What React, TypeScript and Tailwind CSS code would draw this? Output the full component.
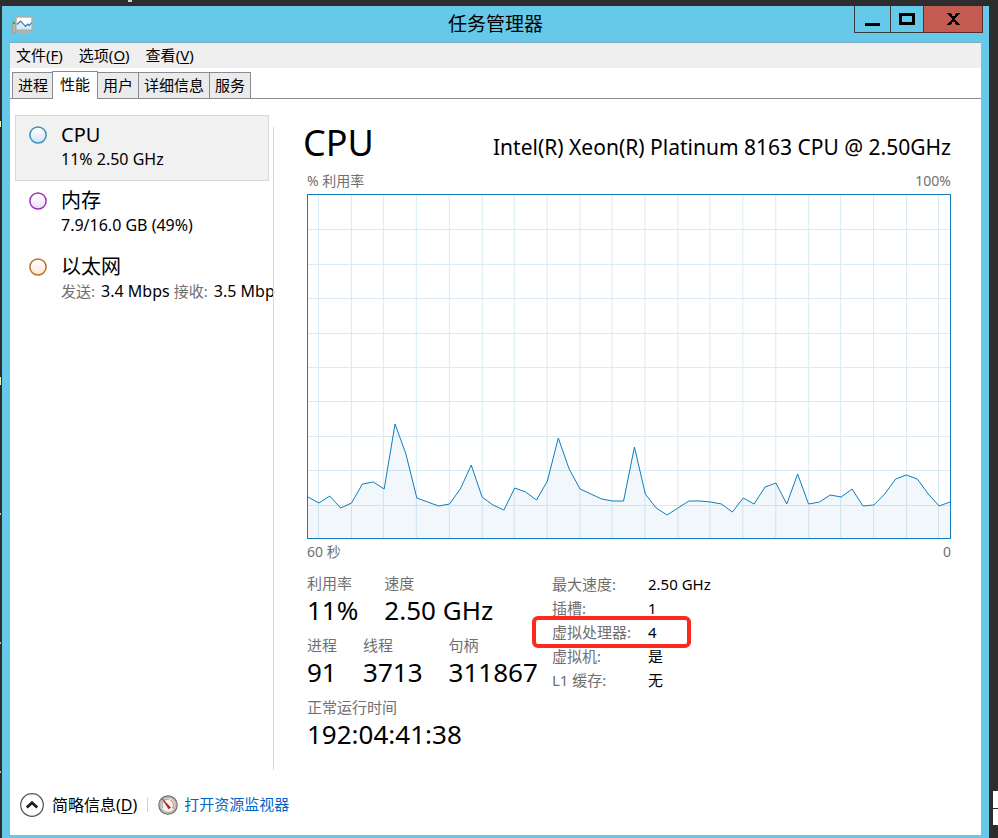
import { useState } from "react";

type Resource = {
  id: string;
  name: string;
  stroke: string;
  fill: string;
  parts: { label?: string; value: string }[];
};

const menus = [
  { label: "文件", key: "F" },
  { label: "选项", key: "O" },
  { label: "查看", key: "V" },
];

const tabs = ["进程", "性能", "用户", "详细信息", "服务"];

const resources: Resource[] = [
  {
    id: "cpu",
    name: "CPU",
    stroke: "#3c8fc0",
    fill: "#cfe2f3",
    parts: [{ value: "11% 2.50 GHz" }],
  },
  {
    id: "memory",
    name: "内存",
    stroke: "#9a35b5",
    fill: "#f0d8fa",
    parts: [{ value: "7.9/16.0 GB (49%)" }],
  },
  {
    id: "ethernet",
    name: "以太网",
    stroke: "#b5702f",
    fill: "#fce3cf",
    parts: [
      { label: "发送:", value: "3.4 Mbps" },
      { label: "接收:", value: "3.5 Mbp" },
    ],
  },
];

const details = [
  { label: "最大速度:", value: "2.50 GHz" },
  { label: "插槽:", value: "1" },
  { label: "虚拟处理器:", value: "4", marked: true },
  { label: "虚拟机:", value: "是" },
  { label: "L1 缓存:", value: "无" },
];

// CPU load samples, chart units above the baseline
const samples = [
  41, 35, 42, 30, 35, 54, 56, 49, 114, 84, 40, 36, 32, 34, 49, 73, 41, 33, 28,
  50, 46, 38, 57, 100, 69, 49, 44, 39, 37, 37, 91, 44, 30, 23, 30, 37, 37, 36,
  34, 26, 40, 34, 51, 55, 34, 64, 34, 36, 43, 41, 49, 32, 33, 44, 59, 63, 59,
  44, 32, 36,
];

function MonitorIcon() {
  return (
    <svg width="22" height="19" viewBox="0 0 22 19" aria-hidden="true">
      <rect x="0.5" y="5" width="3" height="12" fill="#b9b5b0" stroke="#98948f" strokeWidth="0.6" />
      <rect x="1" y="6" width="2" height="2" fill="#2fae35" />
      <path d="M9 14h6l1.5 2.5H19V18H6v-1.5h1.5z" fill="#b8b2ac" />
      <rect x="4" y="1" width="16" height="13" fill="#fff" stroke="#b5aba3" strokeWidth="1.4" />
      <path d="M5 10l3-4 4 5 3-4 4 5v1H5z" fill="#d4ecfa" />
      <path d="M5 8.500l3.500-3.500 5 5.500 2.500-2.500 1.500 1.500 2-3" fill="none" stroke="#2b7fb8" strokeWidth="1.2" />
    </svg>
  );
}

function Circle({ item }: { item: Resource }) {
  return (
    <svg className="mt-2.5 shrink-0" width="18" height="18" viewBox="0 0 18 18" aria-hidden="true">
      <defs>
        <linearGradient id={item.id} x1="0" y1="0" x2="0" y2="1">
          <stop offset="0.1" stopColor="#fff" />
          <stop offset="1" stopColor={item.fill} />
        </linearGradient>
      </defs>
      <circle cx="9" cy="9" r="8.1" fill={`url(#${item.id})`} stroke={item.stroke} strokeWidth="1.5" />
    </svg>
  );
}

function GaugeIcon() {
  return (
    <svg width="20" height="20" viewBox="0 0 20 20" aria-hidden="true">
      <circle cx="10" cy="10" r="9.200" fill="#c9c9c9" stroke="#77706d" strokeWidth="1.2" />
      <circle cx="10" cy="10" r="7.300" fill="#f6f4f2" stroke="#a9a4a1" strokeWidth="0.8" />
      <path d="M5 13a5.800 5.800 0 0 1 6-8.700" fill="none" stroke="#aaa" strokeWidth="1.2" />
      <path d="M12.500 5a5.800 5.800 0 0 1 2 8.500" fill="none" stroke="#e59a6a" strokeWidth="1.4" />
      <path d="M4.500 4l8 8.500-1.800 1.300z" fill="#c8151b" stroke="#c8151b" strokeWidth="0.8" />
    </svg>
  );
}

function UsageChart() {
  const step = 643 / (samples.length - 1);
  const line = samples.map((v, i) => `${i * step},${343 - v}`).join(" ");
  const columns = Array.from({ length: 20 }, (_, i) => Math.round(11 + i * 32.7) - 0.5);
  const rows = Array.from({ length: 9 }, (_, i) => Math.round((i + 1) * 34.4) + 0.5);

  return (
    <div className="border border-[#117dbb] bg-white">
      <svg className="block h-[343px] w-full" viewBox="0 0 643 343" preserveAspectRatio="none" role="img" aria-label="% 利用率">
        <g stroke="#d9eaf4">
          {columns.map((x) => (
            <line key={x} x1={x} x2={x} y1="0" y2="343" />
          ))}
          {rows.map((y) => (
            <line key={y} x1="0" x2="643" y1={y} y2={y} />
          ))}
        </g>
        <polygon points={`0,343 ${line} 643,343`} fill="#117dbb" fillOpacity="0.06" />
        <polyline points={line} fill="none" stroke="#117dbb" vectorEffect="non-scaling-stroke" />
      </svg>
    </div>
  );
}

function Stat({ label, value }: { label: string; value: string }) {
  return (
    <div>
      <dt className="text-[15px] leading-5 text-[#707070]">{label}</dt>
      <dd className="text-[26px] leading-[34px]">{value}</dd>
    </div>
  );
}

export default function App() {
  const [tab, setTab] = useState("性能");
  const [selected, setSelected] = useState("cpu");

  return (
    <div className="relative flex min-h-screen overflow-hidden bg-[#2d2d2d] pt-1.5 pr-[9px] pl-0.5 font-['Noto_Sans','Noto_Sans_CJK_SC',sans-serif] text-[15px] text-black">
      {/* Desktop behind the window */}
      <div className="absolute top-0 left-32 h-0.5 w-1 bg-[#d0d0d0]" />
      <div className="absolute top-[121px] left-0 h-1.5 w-px bg-[#f3efb0]" />
      <div className="absolute top-[377px] left-0 h-2 w-px bg-[#f3efb0]" />
      <div className="absolute top-[513px] left-0 h-0.5 w-px bg-[#f0b070]" />
      <div className="absolute top-[642px] left-0 h-0.5 w-px bg-[#f0b070]" />
      <div className="absolute top-[771px] left-0 h-0.5 w-px bg-[#f0b070]" />
      <div className="absolute top-[791px] right-0 h-[17px] w-[5px] bg-white" />
      <div className="absolute top-[809px] right-0 h-4 w-[5px] bg-white" />

      <div className="flex min-w-0 flex-1 flex-col bg-[#66c9ea] px-2 pb-[3px]">
        {/* Title bar */}
        <header className="flex h-9 items-start">
          <div className="flex-1 pt-2.5 pl-0.5">
            <MonitorIcon />
          </div>
          <h1 className="pr-1 text-[19px] leading-9">任务管理器</h1>
          <div className="-mr-0.5 flex flex-1 justify-end">
            <button aria-label="最小化" className="flex h-[27px] w-[37px] items-center justify-center border border-t-0 border-[#3b3b3b]">
              <svg width="15" height="13" viewBox="0 0 15 13">
                <path d="M0 10h15v3H0z" />
              </svg>
            </button>
            <button aria-label="最大化" className="flex h-[27px] w-8 items-center justify-center border-b border-[#3b3b3b]">
              <svg width="16" height="12" viewBox="0 0 16 12">
                <path d="M0 0h16v12H0zM3 3v6h10V3z" fillRule="evenodd" />
              </svg>
            </button>
            <button aria-label="关闭" className="flex h-[27px] w-[60px] items-center justify-center border border-t-0 border-[#5a2f2b] bg-[#c35b50]">
              <svg width="13" height="12" viewBox="0 0 13 12">
                <path d="M0 0h4v1h1v2h3V1h1V0h4v1h-1v1h-1v1h-1v1H9v1H8v2h1v1h1v1h1v1h1v1h1v1H9v-1H8V9H5v2H4v1H0v-1h1v-1h1V9h1V8h1V7h1V5H4V4H3V3H2V2H1V1H0z" />
              </svg>
            </button>
          </div>
        </header>

        <div className="flex flex-1 flex-col border-t border-[#7fa9bd] bg-white">
          {/* Menu */}
          <nav className="flex h-[25px] items-center gap-4 bg-[#efefef] px-1.5">
            {menus.map((m) => (
              <button key={m.key}>
                {m.label}(<u className="underline-offset-2">{m.key}</u>)
              </button>
            ))}
          </nav>

          {/* Tabs */}
          <div role="tablist" className="flex h-[31px] items-end border-b border-[#8a8a94] px-0.5">
            {tabs.map((t) => (
              <button
                key={t}
                role="tab"
                aria-selected={tab === t}
                onClick={() => setTab(t)}
                className={
                  tab === t
                    ? "relative -mr-px -mb-px -ml-px h-7 border border-b-0 border-[#8a8a94] bg-white px-[7px] pb-0.5"
                    : "h-[26px] border border-r-0 border-b-0 border-[#8a8a94] bg-[#ebebeb] px-[5px] last:border-r"
                }
              >
                {t}
              </button>
            ))}
          </div>

          <main className="flex flex-1 items-stretch">
            {/* Resource list */}
            <aside className="w-[264px] shrink-0 pt-4 pl-[5px]">
              {resources.map((item) => (
                <button
                  key={item.id}
                  onClick={() => setSelected(item.id)}
                  className={`flex h-[66px] w-[254px] items-start gap-3.5 border pl-[13px] text-left ${
                    selected === item.id
                      ? "border-[#d9d9d9] bg-[#f1f1f1]"
                      : "border-transparent"
                  }`}
                >
                  <Circle item={item} />
                  <span className="pt-[7px]">
                    <span className="block text-[20px] leading-6">{item.name}</span>
                    <span className="block text-[16px] leading-6 whitespace-nowrap">
                      {item.parts.map((p) => (
                        <span key={p.value}>
                          {p.label && <span className="mr-1.5 text-[15px] text-[#707070]">{p.label}</span>}
                          {p.value}{" "}
                        </span>
                      ))}
                    </span>
                  </span>
                </button>
              ))}
            </aside>
            <div className="mt-7 -ml-px w-px shrink-0 bg-[#d9d9d9]" />

            {/* Details */}
            <section className="min-w-0 flex-1 pt-5 pr-[30px] pl-[33px]">
              <div className="flex items-end justify-between">
                <h2 className="-ml-1 text-[36px] leading-[48px]">CPU</h2>
                <p className="text-[21px] leading-10">Intel(R) Xeon(R) Platinum 8163 CPU @ 2.50GHz</p>
              </div>
              <div className="flex justify-between py-[3px] text-[14px] leading-[21px] text-[#707070]">
                <span>% 利用率</span>
                <span>100%</span>
              </div>
              <UsageChart />
              <div className="flex justify-between pt-[3px] text-[14px] leading-5 text-[#707070]">
                <span>60 秒</span>
                <span>0</span>
              </div>

              <div className="flex pt-2.5">
                <div className="w-[245px] space-y-2 pt-px whitespace-nowrap">
                  <dl className="flex gap-[26px]">
                    <Stat label="利用率" value="11%" />
                    <Stat label="速度" value="2.50 GHz" />
                  </dl>
                  <dl className="flex gap-[26px]">
                    <Stat label="进程" value="91" />
                    <Stat label="线程" value="3713" />
                    <Stat label="句柄" value="311867" />
                  </dl>
                  <dl>
                    <Stat label="正常运行时间" value="192:04:41:38" />
                  </dl>
                </div>

                <dl className="leading-6">
                  {details.map((d) => (
                    <div key={d.label} className="relative flex">
                      <dt className="w-24 text-[#707070]">{d.label}</dt>
                      <dd>{d.value}</dd>
                      {d.marked && (
                        <div className="absolute -top-1 -left-5 h-8 w-[159px] rounded-md border-4 border-[#fb2a1c]" />
                      )}
                    </div>
                  ))}
                </dl>
              </div>
            </section>
          </main>

          {/* Footer */}
          <footer className="flex h-[65px] items-center px-2.5 pt-1">
            <button className="flex items-center gap-2 text-[16px]">
              <svg width="24" height="24" viewBox="0 0 24 24" aria-hidden="true">
                <circle cx="12" cy="12" r="11.300" fill="#fff" stroke="#555" strokeWidth="1.2" />
                <path d="M6.800 14.500L12 9.700l5.200 4.800" fill="none" stroke="#222" strokeWidth="3" />
              </svg>
              <span>
                简略信息(<u className="underline-offset-2">D</u>)
              </span>
            </button>
            <div className="mx-2.5 h-3.5 w-px bg-[#d0d0d0]" />
            <a href="#resmon" className="flex items-center gap-1.5 text-[#0066cc]">
              <GaugeIcon />
              打开资源监视器
            </a>
          </footer>
        </div>
      </div>
    </div>
  );
}
